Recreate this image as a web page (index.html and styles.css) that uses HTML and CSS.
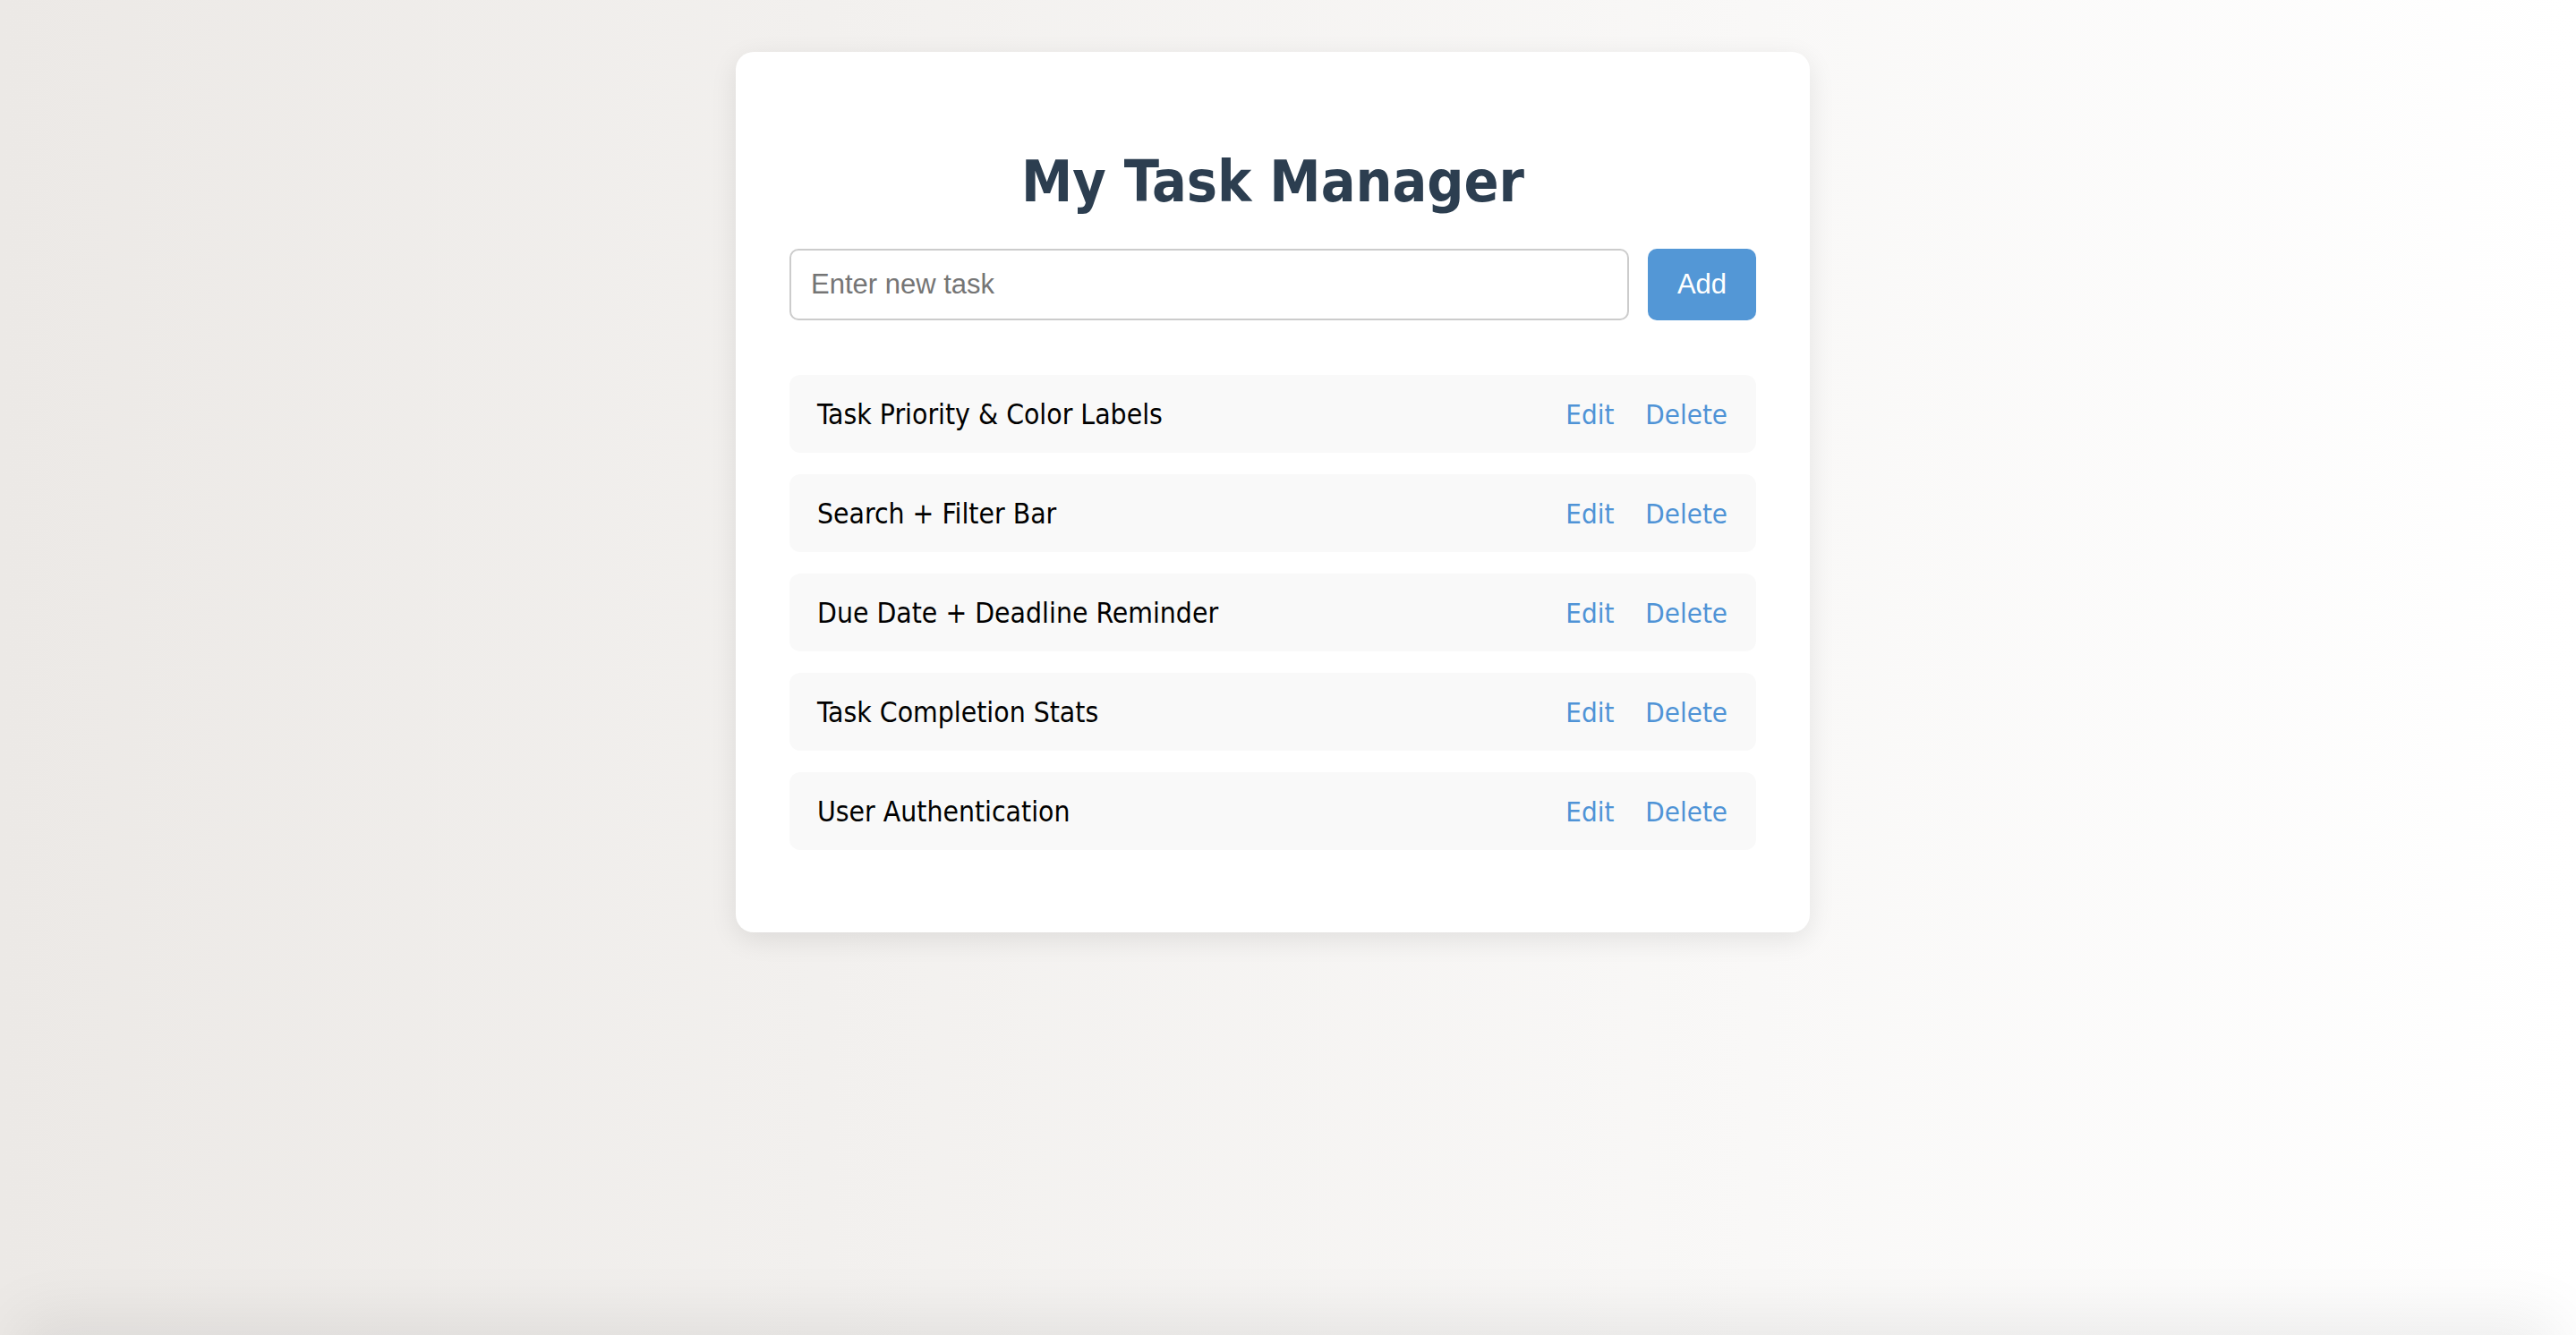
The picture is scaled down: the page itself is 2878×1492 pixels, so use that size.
FILE: index.html
```html
<!DOCTYPE html>
<html lang="en">
<head>
<meta charset="utf-8">
<title>My Task Manager</title>
<link rel="stylesheet" href="styles.css">
</head>
<body>
<div class="page">
  <main class="card">
    <h1 class="title">My Task Manager</h1>
    <form class="add-row" onsubmit="return false">
      <input class="task-input" type="text" placeholder="Enter new task">
      <button class="add-btn" type="submit">Add</button>
    </form>
    <ul class="task-list">
      <li class="task"><span class="task-name">Task Priority &amp; Color Labels</span><span class="actions"><button class="link-btn">Edit</button><button class="link-btn">Delete</button></span></li>
      <li class="task"><span class="task-name">Search + Filter Bar</span><span class="actions"><button class="link-btn">Edit</button><button class="link-btn">Delete</button></span></li>
      <li class="task"><span class="task-name">Due Date + Deadline Reminder</span><span class="actions"><button class="link-btn">Edit</button><button class="link-btn">Delete</button></span></li>
      <li class="task"><span class="task-name">Task Completion Stats</span><span class="actions"><button class="link-btn">Edit</button><button class="link-btn">Delete</button></span></li>
      <li class="task"><span class="task-name">User Authentication</span><span class="actions"><button class="link-btn">Edit</button><button class="link-btn">Delete</button></span></li>
    </ul>
  </main>
</div>
<div class="dock-shadow"></div>
</body>
</html>
```
FILE: styles.css
```css
html {
  min-height: 100%;
}
body {
  margin: 0;
  min-height: 100vh;
  background: linear-gradient(to right, #ece9e6, #ffffff);
  font-family: "DejaVu Sans Condensed", "DejaVu Sans", sans-serif;
  font-stretch: condensed;
  overflow: hidden;
}
.page {
  display: flex;
  justify-content: center;
  padding: 58px 34px 0 0;
}
.card {
  width: 1200px;
  box-sizing: border-box;
  background: #ffffff;
  border-radius: 20px;
  padding: 60px 60px 60px 60px;
  box-shadow: 0 8px 30px rgba(0, 0, 0, 0.09);
}
.title {
  margin: 48px 0 38px;
  font-size: 64px;
  line-height: 74px;
  font-weight: bold;
  text-align: center;
  color: #2c3e50;
}
.add-row {
  display: flex;
  gap: 21px;
  margin: 0;
}
.task-input {
  flex: 1;
  height: 80px;
  box-sizing: border-box;
  border: 2px solid #cccccc;
  border-radius: 10px;
  padding: 0 22px;
  font-family: "Liberation Sans", Arial, sans-serif;
  font-size: 31px;
  color: #222;
  outline: none;
}
.task-input::placeholder {
  color: #757575;
}
.add-btn {
  width: 121px;
  height: 80px;
  border: none;
  border-radius: 10px;
  background: #5397d6;
  color: #ffffff;
  font-family: "Liberation Sans", Arial, sans-serif;
  font-size: 31px;
  padding: 0;
}
.task-list {
  list-style: none;
  margin: 61px 0 32px;
  padding: 0;
  display: flex;
  flex-direction: column;
  gap: 24px;
}
.task {
  height: 87px;
  box-sizing: border-box;
  display: flex;
  align-items: center;
  justify-content: space-between;
  padding: 0 32px 0 31px;
  background: #f9f9f9;
  border-radius: 12px;
  font-size: 31.6px;
  color: #000;
}
.actions {
  display: flex;
  gap: 35px;
}
.link-btn {
  background: none;
  border: none;
  padding: 0;
  font-family: "DejaVu Sans Condensed", "DejaVu Sans", sans-serif;
  font-stretch: condensed;
  font-size: 31px;
  color: #4f93d6;
  cursor: pointer;
}
.dock-shadow {
  position: fixed;
  left: 40px;
  right: 40px;
  bottom: -120px;
  height: 120px;
  box-shadow: 0 0 70px 20px rgba(0, 0, 0, 0.07);
  pointer-events: none;
}
```
